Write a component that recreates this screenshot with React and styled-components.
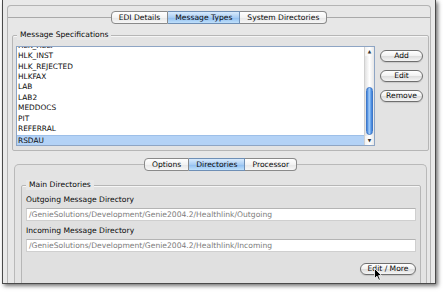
import React from "react";
import styled, { createGlobalStyle } from "styled-components";

const GlobalStyle = createGlobalStyle`
    body {
        margin: 0;
        background: #ffffff;
        font-family: "DejaVu Sans", "Liberation Sans", sans-serif;
        font-size: 7.6px;
        color: #111;
    }
`;

const specs = ["HLK_HELP", "HLK_INST", "HLK_REJECTED", "HLKFAX", "LAB", "LAB2", "MEDDOCS", "PIT", "REFERRAL", "RSDAU"];

export default function App() {
    return (
        <>
            <GlobalStyle />
            <Stage>
                <Window>
                    <Panel>
                        <TabStrip line>
                            <Tab first>EDI Details</Tab>
                            <Tab active>Message Types</Tab>
                            <Tab last>System Directories</Tab>
                        </TabStrip>

                        <Group top="6px" left="4px" right="1px">
                            <Legend>Message Specifications</Legend>
                            <SpecsRow>
                                <ListBox>
                                    <Rows>
                                        {specs.map((name) => (
                                            <Row key={name} selected={name === "RSDAU"}>{name}</Row>
                                        ))}
                                    </Rows>
                                    <Scrollbar>
                                        <Arrow>▲</Arrow>
                                        <Track>
                                            <Thumb />
                                        </Track>
                                        <Arrow>▼</Arrow>
                                    </Scrollbar>
                                </ListBox>
                                <ButtonColumn>
                                    <PillButton>Add</PillButton>
                                    <PillButton>Edit</PillButton>
                                    <PillButton>Remove</PillButton>
                                </ButtonColumn>
                            </SpecsRow>
                        </Group>

                        <InnerTabView>
                            <TabStrip overlap>
                                <Tab first>Options</Tab>
                                <Tab active>Directories</Tab>
                                <Tab last>Processor</Tab>
                            </TabStrip>
                            <InnerPanel>
                                <Group top="0px" left="6px" right="5px" dark>
                                    <Legend>Main Directories</Legend>
                                    <FieldLabel>Outgoing Message Directory</FieldLabel>
                                    <PathField>/GenieSolutions/Development/Genie2004.2/Healthlink/Outgoing</PathField>
                                    <FieldLabel>Incoming Message Directory</FieldLabel>
                                    <PathField>/GenieSolutions/Development/Genie2004.2/Healthlink/Incoming</PathField>
                                    <Footer>
                                        <PillButton wide>Edit / More</PillButton>
                                        <Cursor width="8" height="13" viewBox="0 0 8 13">
                                            <path d="M0.5 0.5 L0.5 10.5 L3 8.2 L4.8 12.3 L6.3 11.6 L4.6 7.6 L7.6 7.6 Z" fill="#000" stroke="#fff" strokeWidth="0.8" />
                                        </Cursor>
                                    </Footer>
                                </Group>
                            </InnerPanel>
                        </InnerTabView>
                    </Panel>
                </Window>
            </Stage>
        </>
    );
}

const Stage = styled.div`
    width: 443px;
    height: 292px;
    padding-left: 2px;
    box-sizing: border-box;
    overflow: hidden;
`;

const Window = styled.div`
    width: 434px;
    height: 284px;
    box-sizing: border-box;
    background: #e9e9e9;
    border: 1px solid #4a4a4a;
    border-top: none;
    box-shadow: 2px 2px 4px rgba(0, 0, 0, 0.55);
    overflow: hidden;
    display: flex;
    flex-direction: column;
`;

const Panel = styled.div`
    flex: 1;
    margin: 5px 4px 0 4px;
    border: 1px solid #b4b4b4;
    border-bottom: none;
    border-radius: 4px 4px 0 0;
    background: #e7e7e7;
    display: flex;
    flex-direction: column;
`;

const TabStrip = styled.div`
    display: flex;
    justify-content: center;
    margin-top: ${(p) => (p.line ? "5px" : "0")};
    margin-bottom: ${(p) => (p.overlap ? "-7px" : "0")};
    position: relative;
    z-index: 1;
    background: ${(p) => (p.line ? "linear-gradient(#a9a9a9, #a9a9a9) 0 50% / 100% 1px no-repeat" : "none")};
`;

const Tab = styled.div`
    height: 11px;
    line-height: 11px;
    padding: 0 7px;
    border: 1px solid #8a8a8a;
    border-left-width: ${(p) => (p.first ? "1px" : "0")};
    border-radius: ${(p) => (p.first ? "4px 0 0 4px" : p.last ? "0 4px 4px 0" : "0")};
    background: ${(p) =>
        p.active
            ? "linear-gradient(#d9ebfd, #a8cdf4 50%, #8ebdf0 52%, #bfe0fb)"
            : "linear-gradient(#ffffff, #f3f3f3 50%, #e6e6e6 52%, #f7f7f7)"};
    border-color: ${(p) => (p.active ? "#6f8fb5" : "#8a8a8a")};
    color: #0a0a0a;
    white-space: nowrap;
`;

const Group = styled.fieldset`
    margin: ${(p) => `${p.top} ${p.right} 0 ${p.left}`};
    padding: 0 4px 4px 3px;
    min-width: 0;
    border: 1px solid #b6b6b6;
    border-radius: 2px;
    background: ${(p) => (p.dark ? "#e0e0e0" : "#e3e3e3")};
    box-shadow: inset 0 1px 0 #f6f6f6;
`;

const Legend = styled.legend`
    padding: 0 3px;
    margin-left: 1px;
    line-height: 10px;
    color: #0a0a0a;
    background: #e7e7e7;
`;

const SpecsRow = styled.div`
    display: flex;
    gap: 5px;
    margin-top: 6px;
`;

const ListBox = styled.div`
    width: 359px;
    height: 100px;
    box-sizing: border-box;
    border: 1px solid #8ea5c4;
    background: #ffffff;
    display: flex;
`;

const Rows = styled.div`
    flex: 1;
    display: flex;
    flex-direction: column;
    justify-content: flex-end;
    overflow: hidden;
`;

const Row = styled.div`
    flex: none;
    height: 10.44px;
    line-height: 10.44px;
    padding-left: 1px;
    font-size: 7.4px;
    color: #0a0a0a;
    background: ${(p) => (p.selected ? "#b3d2f6" : "transparent")};
    border-top: ${(p) => (p.selected ? "1px solid #9dbfe8" : "none")};
    box-sizing: border-box;
`;

const Scrollbar = styled.div`
    width: 9px;
    display: flex;
    flex-direction: column;
    border-left: 1px solid #d0d0d0;
    background: linear-gradient(90deg, #e2e2e2, #ffffff 50%, #e6e6e6);
`;

const Arrow = styled.div`
    height: 9px;
    font-size: 4.5px;
    line-height: 9px;
    text-align: center;
    color: #333;
    background: linear-gradient(90deg, #f2f2f2, #ffffff 50%, #e8e8e8);
`;

const Track = styled.div`
    flex: 1;
    display: flex;
    flex-direction: column;
    justify-content: flex-end;
    padding: 0 1px 1px 1px;
`;

const Thumb = styled.div`
    height: 46px;
    border-radius: 4px;
    border: 1px solid #3f78c8;
    background: linear-gradient(90deg, #3d7fd8, #a9d1fb 45%, #6ea9ee 70%, #3a7cd6);
`;

const ButtonColumn = styled.div`
    display: flex;
    flex-direction: column;
    gap: 8px;
    padding-top: 4px;
`;

const PillButton = styled.div`
    width: ${(p) => (p.wide ? "54px" : "41px")};
    height: 10px;
    line-height: 10px;
    text-align: center;
    border: 1px solid #6f6f6f;
    border-radius: 6px;
    background: linear-gradient(#ffffff, #f1f1f1 50%, #dedede 55%, #f5f5f5);
    box-shadow: 0 1px 1px rgba(0, 0, 0, 0.12);
    color: #0a0a0a;
    white-space: nowrap;
`;

const InnerTabView = styled.div`
    flex: 1;
    display: flex;
    flex-direction: column;
    margin: 7px 3px 0 6px;
`;

const InnerPanel = styled.div`
    flex: 1;
    padding-top: 15px;
    border: 1px solid #b9b9b9;
    border-bottom: none;
    border-radius: 5px 5px 0 0;
    background: #e3e3e3;
`;

const FieldLabel = styled.div`
    margin: 5px 0 0 1px;
    line-height: 10px;
    color: #0a0a0a;
`;

const PathField = styled.div`
    margin: 3px 0 0 1px;
    height: 13px;
    line-height: 12px;
    box-sizing: border-box;
    padding-left: 2px;
    background: #ffffff;
    border: 1px solid #cfcfcf;
    border-top-color: #b4b4b4;
    color: #7c7c7c;
    white-space: nowrap;
`;

const Footer = styled.div`
    display: flex;
    justify-content: flex-end;
    margin-top: 11px;
    position: relative;
    height: 30px;
`;

const Cursor = styled.svg`
    position: absolute;
    right: 34px;
    top: 5px;
`;
